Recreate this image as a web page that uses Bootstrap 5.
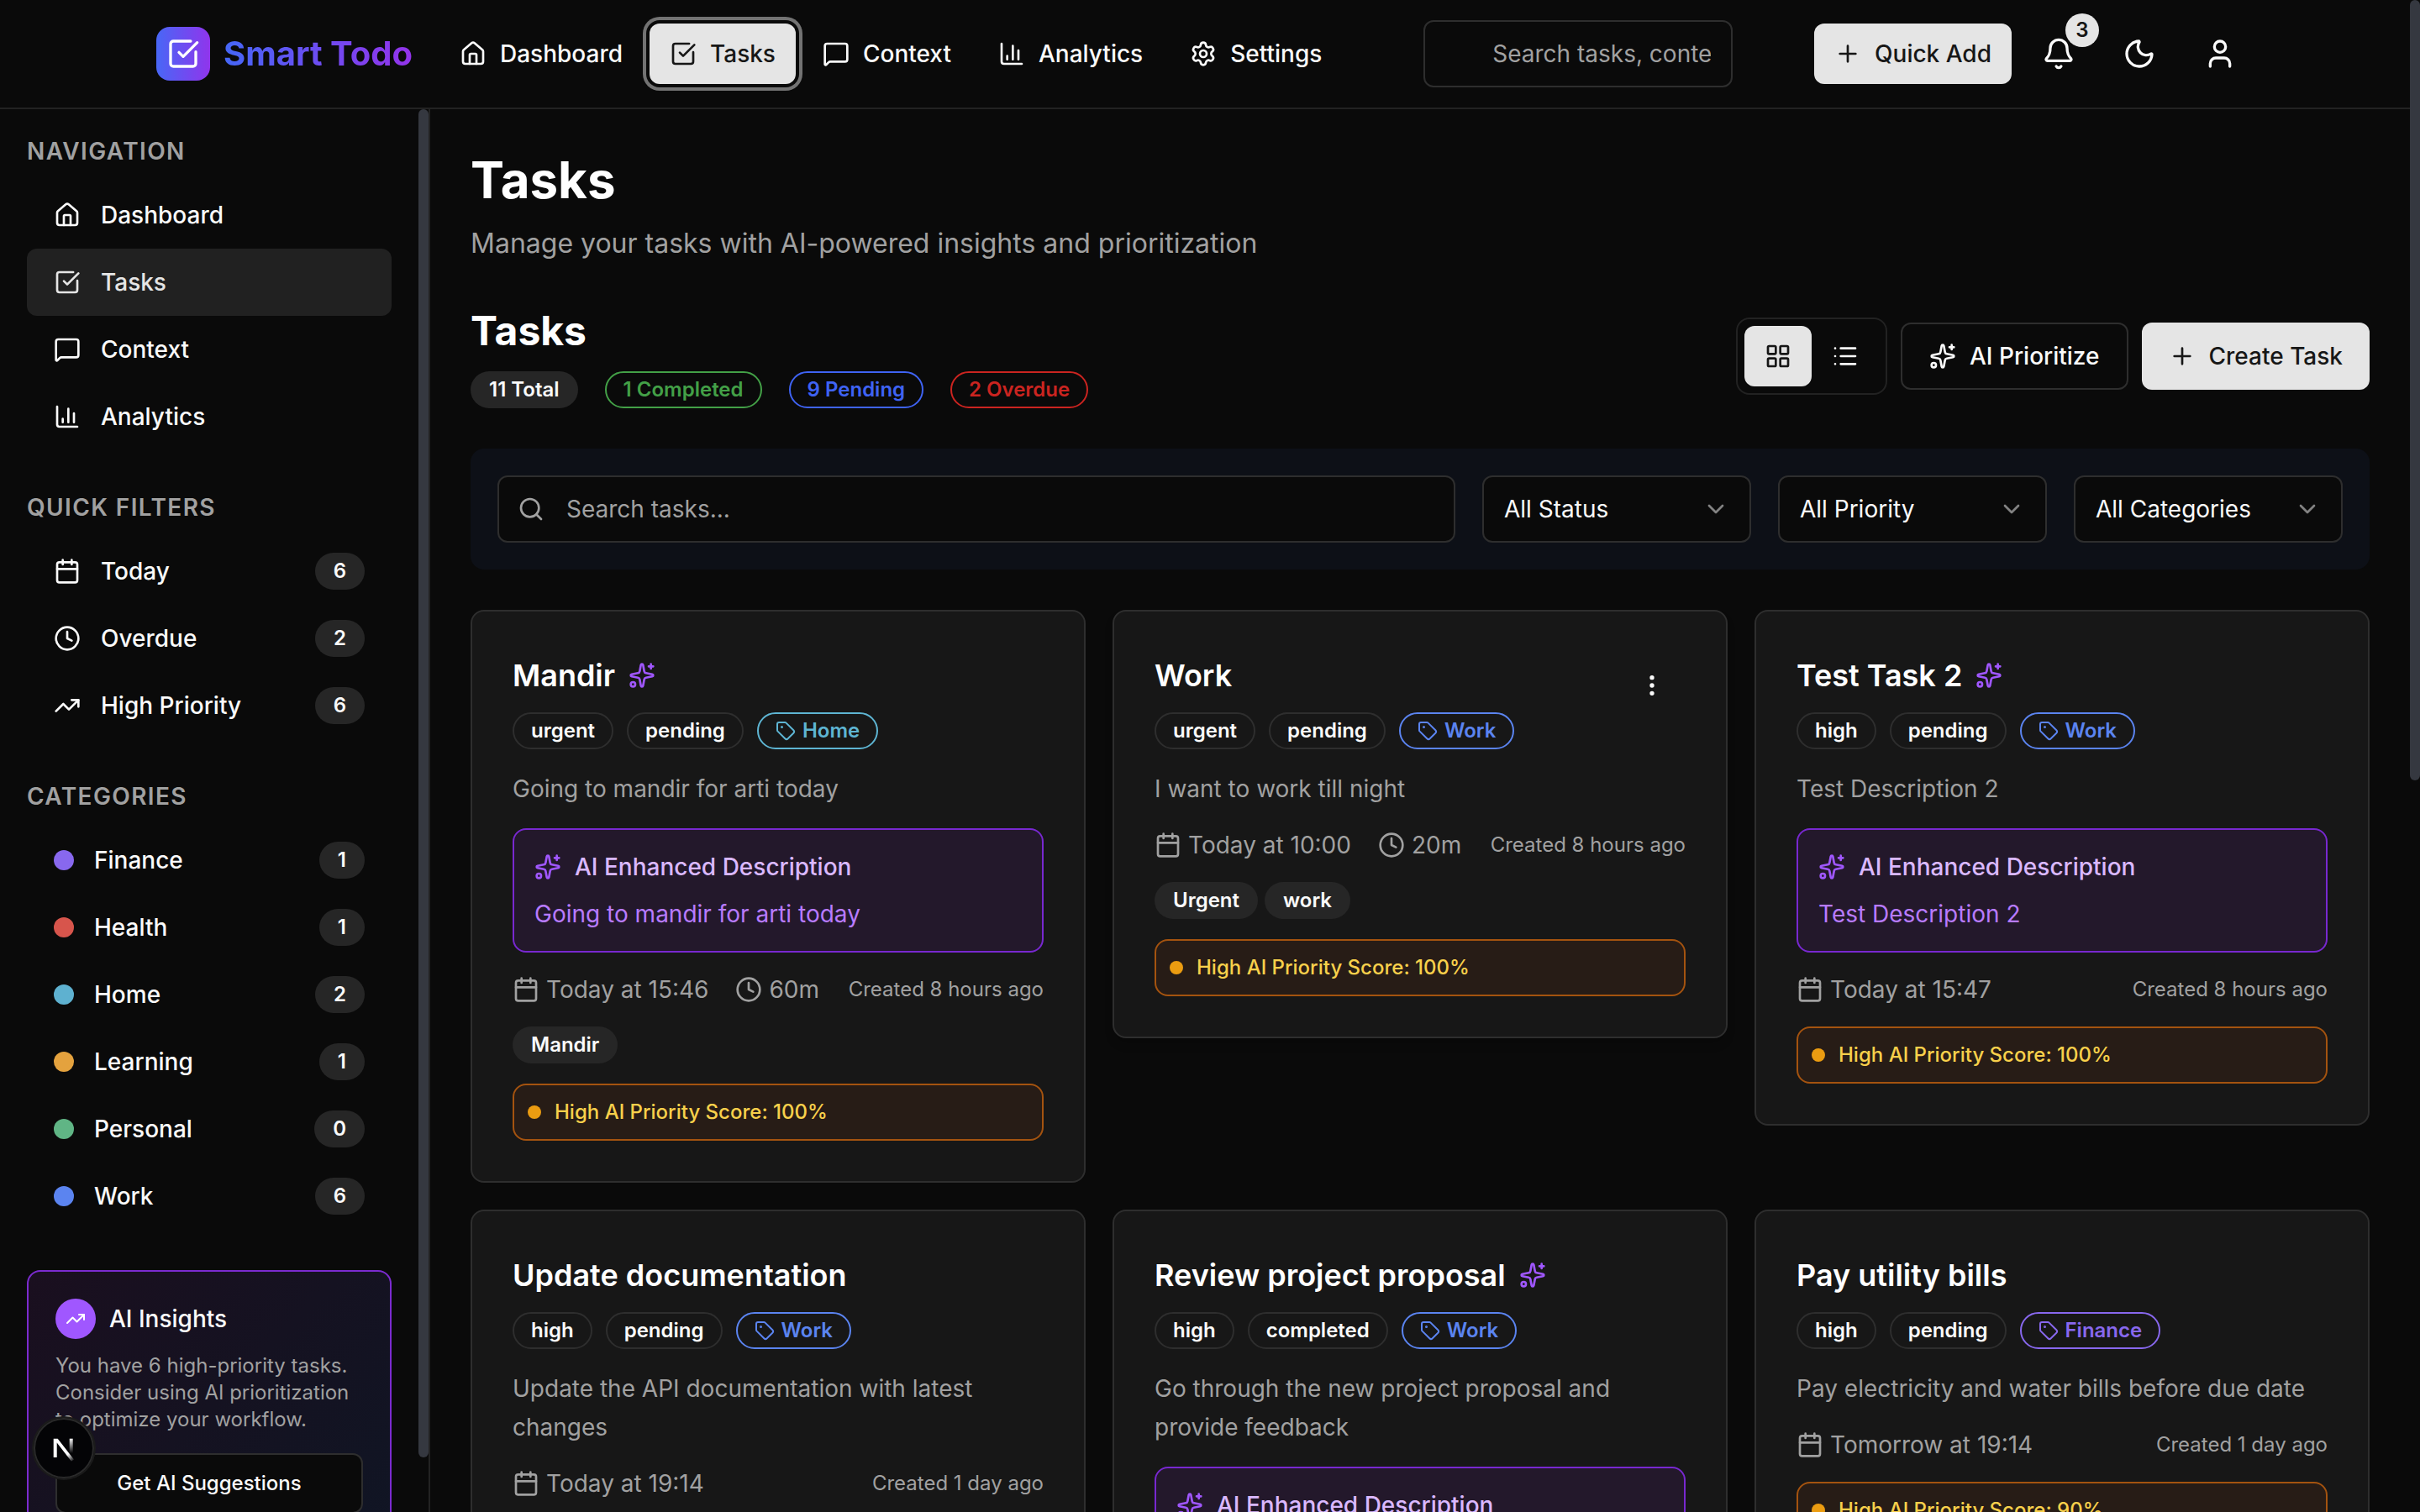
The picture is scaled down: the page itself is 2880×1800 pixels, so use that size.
<!DOCTYPE html>
<html lang="en" data-bs-theme="dark">
<head>
<meta charset="utf-8">
<meta name="viewport" content="width=device-width, initial-scale=1">
<title>Smart Todo</title>
<link href="https://cdn.jsdelivr.net/npm/bootstrap@5.3.0/dist/css/bootstrap.min.css" rel="stylesheet">
<style>
:root {
  --bg: #0a0a0a; --fg: #fafafa; --muted: #a1a1a1; --line: #222222; --field-line: #2e2e2e;
  --panel: #171717; --chip: #262626; --primary: #e5e5e5; --primary-fg: #171717; --thumb: #353840;
  --sky: #5eb5d3; --blue: #5b84f0; --violet: #8868ee;
}
body { background: var(--bg); color: var(--fg); font-family: Inter, sans-serif; font-size: 28px; line-height: 40px; }
svg { display: block; flex: none; fill: none; stroke: currentColor; stroke-width: 2; stroke-linecap: round; stroke-linejoin: round; width: 32px; height: 32px; }
.ic-sm { width: 24px; height: 24px; }
.ic-lg { width: 40px; height: 40px; }
.mw0 { min-width: 0; min-height: 0; }
.gap-32 { gap: 32px; }
.gap-48 { gap: 48px; }
.tone-muted { color: var(--muted); }

/* scroll tracks */
.track { width: 12px; flex: none; }
.thumb { background: var(--thumb); border-radius: 6px; }
.thumb-page { height: 51.6%; }
.thumb-side { height: 96.1%; }

/* top bar */
.topbar { border-bottom: 2px solid var(--line); padding: 24px 0; }
.topbar-in { width: 100%; max-width: 2560px; margin: 0 auto; padding: 0 32px; }
.logo-tile { width: 64px; height: 64px; border-radius: 16px; background: linear-gradient(90deg, #4867f6, #9035ec); color: #fff; }
.logo-name { font-size: 40px; line-height: 56px; font-weight: 700; background: linear-gradient(90deg, #4567f7, #9333ea); -webkit-background-clip: text; background-clip: text; color: transparent; }
.act { display: inline-flex; align-items: center; justify-content: center; gap: 16px; height: 80px; padding: 0 32px; border: 0; border-radius: 12px; font-size: 28px; line-height: 40px; font-weight: 500; color: var(--fg); background: transparent; text-decoration: none; white-space: nowrap; }
.act-solid { background: var(--primary); color: var(--primary-fg); }
.act-line { background: var(--bg); border: 2px solid var(--field-line); }
.act-sm { height: 72px; padding: 0 24px; }
.act-square { width: 80px; padding: 0; }
.act-focus { box-shadow: 0 0 0 4px var(--bg), 0 0 0 8px #737373; }
.count-dot { top: -8px; right: -8px; width: 40px; height: 40px; border-radius: 20px; background: var(--primary); color: var(--primary-fg); font-size: 24px; line-height: 40px; font-weight: 600; text-align: center; }
.field { width: 100%; height: 80px; border: 2px solid var(--field-line); border-radius: 12px; background: var(--bg); color: var(--fg); font-size: 28px; line-height: 40px; padding: 0 24px; appearance: none; outline: 0; }
.field::placeholder { color: var(--muted); opacity: 1; }
.field-search { padding-left: 80px; }
.field-icon { top: 24px; color: var(--muted); pointer-events: none; }
.field-icon-start { left: 24px; }
.field-icon-end { right: 26px; opacity: .8; }
.top-search { width: 368px; }
.pick { width: 320px; }

/* side bar */
.sidebar { width: 512px; flex: none; border-right: 2px solid var(--line); }
.side-in { padding: 30px 32px 32px; }
.side-title { margin: 0 0 16px; font-size: 28px; line-height: 40px; font-weight: 600; letter-spacing: .05em; text-transform: uppercase; color: var(--muted); }
.side-link { display: flex; align-items: center; gap: 24px; height: 80px; padding: 0 32px; border-radius: 12px; color: var(--fg); font-weight: 500; text-decoration: none; }
.side-link.active { background: #212121; color: var(--primary); }
.swatch { width: 24px; height: 24px; border-radius: 12px; flex: none; }
.insights { border: 2px solid #7b2bcf; border-radius: 16px; padding: 32px; background: linear-gradient(135deg, #1a0f1f, #151221 50%, #101524); }
.insights-icon { width: 48px; height: 48px; border-radius: 24px; background: #a057ff; color: #fff; }
.text-24 { font-size: 24px; line-height: 32px; }
.dev-badge { left: 40px; bottom: 40px; width: 72px; height: 72px; padding: 0; border: 0; border-radius: 36px; background: #040406; box-shadow: inset 0 0 0 2px #2a2a2a, 0 0 0 2px #1b1b1b; z-index: 5; }
.dev-badge svg { width: 72px; height: 72px; }

/* content */
.content { padding: 48px 48px 0; }
.page-title { font-size: 60px; line-height: 72px; font-weight: 700; }
.page-lead { font-size: 32px; line-height: 48px; color: var(--muted); }
.list-title { font-size: 48px; line-height: 64px; font-weight: 700; }
.pill { display: inline-flex; align-items: center; gap: 8px; padding: 4px 20px; border: 2px solid var(--field-line); border-radius: 22px; font-size: 24px; line-height: 32px; font-weight: 600; color: var(--fg); white-space: nowrap; }
.pill-fill { background: var(--chip); border-color: transparent; }
.pill-green { color: #43a047; border-color: #43a047; }
.pill-indigo { color: #3f63f4; border-color: #3f63f4; }
.pill-red { color: #cb2420; border-color: #cb2420; }
.pill-sky { color: var(--sky); border-color: var(--sky); }
.pill-blue { color: var(--blue); border-color: var(--blue); }
.pill-violet { color: var(--violet); border-color: var(--violet); }
.toggle { padding: 8px; border: 2px solid var(--line); border-radius: 16px; }
.toggle .act { width: 80px; padding: 0; }
.filters { background: #0d1017; border-radius: 16px; padding: 32px; }
.tiles { --bs-gutter-x: 32px; --bs-gutter-y: 32px; }
.task { background: var(--panel); border: 2px solid var(--field-line); border-radius: 16px; padding: 48px; gap: 24px; }
.task-hover { box-shadow: 0 8px 12px -2px rgba(0, 0, 0, .2); }
.task-name { font-size: 36px; line-height: 56px; font-weight: 600; }
.task-text { line-height: 46px; color: var(--muted); }
.tone-spark { color: #a057ff; }
.ai-box { border: 2px solid #7828d0; border-radius: 16px; background: #23182b; padding: 24px; gap: 16px; color: #b87bff; }
.ai-head { font-weight: 500; color: #dab8ff; }
.score { border: 2px solid #a4530f; border-radius: 16px; background: #271c16; padding: 16px; color: #f8d04b; font-size: 24px; line-height: 32px; font-weight: 500; }
.score-dot { width: 16px; height: 16px; border-radius: 8px; background: #eb9c11; }
</style>
<script src="https://cdn.jsdelivr.net/npm/bootstrap@5.3.0/dist/js/bootstrap.bundle.min.js"></script>
</head>
<body class="vh-100 overflow-hidden d-flex">

<svg class="d-none" aria-hidden="true">
  <symbol id="house" viewBox="0 0 24 24"><path d="M15 21v-8a1 1 0 0 0-1-1h-4a1 1 0 0 0-1 1v8"/><path d="M3 10a2 2 0 0 1 .709-1.528l7-5.999a2 2 0 0 1 2.582 0l7 5.999A2 2 0 0 1 21 10v9a2 2 0 0 1-2 2H5a2 2 0 0 1-2-2z"/></symbol>
  <symbol id="check" viewBox="0 0 24 24"><path d="M21 10.656V19a2 2 0 0 1-2 2H5a2 2 0 0 1-2-2V5a2 2 0 0 1 2-2h12.344"/><path d="m9 11 3 3L22 4"/></symbol>
  <symbol id="message" viewBox="0 0 24 24"><path d="M22 17a2 2 0 0 1-2 2H6.828a2 2 0 0 0-1.414.586l-2.202 2.202A.71.71 0 0 1 2 21.286V5a2 2 0 0 1 2-2h16a2 2 0 0 1 2 2z"/></symbol>
  <symbol id="chart" viewBox="0 0 24 24"><path d="M3 3v16a2 2 0 0 0 2 2h16M18 17V9M13 17V5M8 17v-3"/></symbol>
  <symbol id="gear" viewBox="0 0 24 24"><path d="M9.671 4.136a2.34 2.34 0 0 1 4.659 0 2.34 2.34 0 0 0 3.319 1.915 2.34 2.34 0 0 1 2.33 4.033 2.34 2.34 0 0 0 0 3.831 2.34 2.34 0 0 1-2.33 4.033 2.34 2.34 0 0 0-3.319 1.915 2.34 2.34 0 0 1-4.659 0 2.34 2.34 0 0 0-3.32-1.915 2.34 2.34 0 0 1-2.33-4.033 2.34 2.34 0 0 0 0-3.831A2.34 2.34 0 0 1 6.35 6.051a2.34 2.34 0 0 0 3.319-1.915"/><circle cx="12" cy="12" r="3"/></symbol>
  <symbol id="plus" viewBox="0 0 24 24"><path d="M5 12h14M12 5v14"/></symbol>
  <symbol id="bell" viewBox="0 0 24 24"><path d="M10.268 21a2 2 0 0 0 3.464 0"/><path d="M3.262 15.326A1 1 0 0 0 4 17h16a1 1 0 0 0 .74-1.673C19.41 13.956 18 12.499 18 8A6 6 0 0 0 6 8c0 4.499-1.411 5.956-2.738 7.326"/></symbol>
  <symbol id="moon" viewBox="0 0 24 24"><path d="M20.985 12.486a9 9 0 1 1-9.473-9.472c.405-.022.617.46.402.803a6 6 0 0 0 8.268 8.268c.344-.215.825-.004.803.401"/></symbol>
  <symbol id="user" viewBox="0 0 24 24"><path d="M19 21v-2a4 4 0 0 0-4-4H9a4 4 0 0 0-4 4v2"/><circle cx="12" cy="7" r="4"/></symbol>
  <symbol id="grid" viewBox="0 0 24 24"><rect width="7" height="7" x="3" y="3" rx="1"/><rect width="7" height="7" x="14" y="3" rx="1"/><rect width="7" height="7" x="14" y="14" rx="1"/><rect width="7" height="7" x="3" y="14" rx="1"/></symbol>
  <symbol id="list" viewBox="0 0 24 24"><path d="M3 5h.01M3 12h.01M3 19h.01M8 5h13M8 12h13M8 19h13"/></symbol>
  <symbol id="sparkles" viewBox="0 0 24 24"><path d="M11.017 2.814a1 1 0 0 1 1.966 0l1.051 5.558a2 2 0 0 0 1.594 1.594l5.558 1.051a1 1 0 0 1 0 1.966l-5.558 1.051a2 2 0 0 0-1.594 1.594l-1.051 5.558a1 1 0 0 1-1.966 0l-1.051-5.558a2 2 0 0 0-1.594-1.594l-5.558-1.051a1 1 0 0 1 0-1.966l5.558-1.051a2 2 0 0 0 1.594-1.594zM20 2v4M22 4h-4"/><circle cx="4" cy="20" r="2"/></symbol>
  <symbol id="calendar" viewBox="0 0 24 24"><path d="M8 2v4M16 2v4M3 10h18"/><rect width="18" height="18" x="3" y="4" rx="2"/></symbol>
  <symbol id="clock" viewBox="0 0 24 24"><path d="M12 6v6l4 2"/><circle cx="12" cy="12" r="10"/></symbol>
  <symbol id="trend" viewBox="0 0 24 24"><path d="M16 7h6v6"/><path d="m22 7-8.5 8.5-5-5L2 17"/></symbol>
  <symbol id="tag" viewBox="0 0 24 24"><path d="M12.586 2.586A2 2 0 0 0 11.172 2H4a2 2 0 0 0-2 2v7.172a2 2 0 0 0 .586 1.414l8.704 8.704a2.426 2.426 0 0 0 3.42 0l6.58-6.58a2.426 2.426 0 0 0 0-3.42z"/><circle cx="7.5" cy="7.5" r=".5" fill="currentColor"/></symbol>
  <symbol id="dots" viewBox="0 0 24 24"><circle cx="12" cy="12" r="1"/><circle cx="12" cy="5" r="1"/><circle cx="12" cy="19" r="1"/></symbol>
  <symbol id="search" viewBox="0 0 24 24"><path d="m21 21-4.34-4.34"/><circle cx="11" cy="11" r="8"/></symbol>
  <symbol id="chevron" viewBox="0 0 24 24"><path d="m6 9 6 6 6-6"/></symbol>
</svg>

<div class="d-flex flex-column flex-fill mw0">
  <header class="topbar">
    <div class="topbar-in d-flex align-items-center justify-content-between">
      <div class="d-flex align-items-center gap-32">
        <a href="#" class="d-flex align-items-center gap-3 text-decoration-none">
          <span class="logo-tile d-flex align-items-center justify-content-center"><svg class="ic-lg"><use href="#check"/></svg></span>
          <span class="logo-name">Smart Todo</span>
        </a>
        <nav class="d-flex align-items-center gap-2" aria-label="Main">
          <a href="#" class="act act-sm"><svg><use href="#house"/></svg>Dashboard</a>
          <a href="#" class="act act-sm act-solid act-focus" aria-current="page"><svg><use href="#check"/></svg>Tasks</a>
          <a href="#" class="act act-sm"><svg><use href="#message"/></svg>Context</a>
          <a href="#" class="act act-sm"><svg><use href="#chart"/></svg>Analytics</a>
          <a href="#" class="act act-sm"><svg><use href="#gear"/></svg>Settings</a>
        </nav>
      </div>
      <div class="top-search"><input class="field field-search" type="text" placeholder="Search tasks, contexts..." aria-label="Search tasks and contexts"></div>
      <div class="d-flex align-items-center gap-3">
        <button type="button" class="act act-sm act-solid"><svg><use href="#plus"/></svg>Quick Add</button>
        <button type="button" class="act act-square position-relative" aria-label="Notifications"><svg class="ic-lg"><use href="#bell"/></svg><span class="count-dot position-absolute">3</span></button>
        <button type="button" class="act act-square" aria-label="Toggle theme"><svg class="ic-lg"><use href="#moon"/></svg></button>
        <button type="button" class="act act-square" aria-label="Account"><svg class="ic-lg"><use href="#user"/></svg></button>
      </div>
    </div>
  </header>

  <div class="d-flex flex-fill mw0">
    <aside class="sidebar d-flex overflow-hidden">
      <div class="side-in d-flex flex-column flex-fill gap-48 mw0">
        <nav aria-label="Navigation">
          <h2 class="side-title">Navigation</h2>
          <a href="#" class="side-link"><svg><use href="#house"/></svg>Dashboard</a>
          <a href="#" class="side-link active" aria-current="page"><svg><use href="#check"/></svg>Tasks</a>
          <a href="#" class="side-link"><svg><use href="#message"/></svg>Context</a>
          <a href="#" class="side-link"><svg><use href="#chart"/></svg>Analytics</a>
        </nav>
        <nav aria-label="Quick filters">
          <h2 class="side-title">Quick Filters</h2>
          <a href="#" class="side-link"><svg><use href="#calendar"/></svg>Today<span class="pill pill-fill ms-auto">6</span></a>
          <a href="#" class="side-link"><svg><use href="#clock"/></svg>Overdue<span class="pill pill-fill ms-auto">2</span></a>
          <a href="#" class="side-link"><svg><use href="#trend"/></svg>High Priority<span class="pill pill-fill ms-auto">6</span></a>
        </nav>
        <nav aria-label="Categories">
          <h2 class="side-title">Categories</h2>
          <a href="#" class="side-link"><span class="swatch" style="background:#8868ee"></span>Finance<span class="pill pill-fill ms-auto">1</span></a>
          <a href="#" class="side-link"><span class="swatch" style="background:#d7554c"></span>Health<span class="pill pill-fill ms-auto">1</span></a>
          <a href="#" class="side-link"><span class="swatch" style="background:#5eb1d0"></span>Home<span class="pill pill-fill ms-auto">2</span></a>
          <a href="#" class="side-link"><span class="swatch" style="background:#e4a23e"></span>Learning<span class="pill pill-fill ms-auto">1</span></a>
          <a href="#" class="side-link"><span class="swatch" style="background:#60b585"></span>Personal<span class="pill pill-fill ms-auto">0</span></a>
          <a href="#" class="side-link"><span class="swatch" style="background:#5b84f0"></span>Work<span class="pill pill-fill ms-auto">6</span></a>
        </nav>
        <section class="insights">
          <div class="d-flex align-items-center gap-3 mb-3">
            <span class="insights-icon d-flex align-items-center justify-content-center"><svg class="ic-sm"><use href="#trend"/></svg></span>
            <span class="fw-medium">AI Insights</span>
          </div>
          <p class="text-24 tone-muted mb-4">You have 6 high-priority tasks. Consider using AI prioritization to optimize your workflow.</p>
          <button type="button" class="act act-sm act-line w-100 text-24">Get AI Suggestions</button>
        </section>
      </div>
      <div class="track"><div class="thumb thumb-side"></div></div>
    </aside>

    <main class="content d-flex flex-column flex-fill gap-48 mw0 overflow-hidden">
      <div>
        <h1 class="page-title mb-3">Tasks</h1>
        <p class="page-lead mb-0">Manage your tasks with AI-powered insights and prioritization</p>
      </div>

      <div class="d-flex align-items-center justify-content-between">
        <div>
          <h2 class="list-title mb-3">Tasks</h2>
          <div class="d-flex gap-32">
            <span class="pill pill-fill">11 Total</span>
            <span class="pill pill-green">1 Completed</span>
            <span class="pill pill-indigo">9 Pending</span>
            <span class="pill pill-red">2 Overdue</span>
          </div>
        </div>
        <div class="d-flex align-items-center gap-3">
          <div class="toggle d-flex" role="group" aria-label="View">
            <button type="button" class="act act-sm act-solid" aria-label="Grid view"><svg><use href="#grid"/></svg></button>
            <button type="button" class="act act-sm" aria-label="List view"><svg><use href="#list"/></svg></button>
          </div>
          <button type="button" class="act act-line"><svg><use href="#sparkles"/></svg>AI Prioritize</button>
          <button type="button" class="act act-solid"><svg><use href="#plus"/></svg>Create Task</button>
        </div>
      </div>

      <div class="filters d-flex gap-32">
        <div class="position-relative flex-fill">
          <svg class="field-icon field-icon-start position-absolute"><use href="#search"/></svg>
          <input class="field field-search" type="text" placeholder="Search tasks..." aria-label="Search tasks">
        </div>
        <div class="pick position-relative">
          <select class="field" aria-label="Status"><option>All Status</option><option>Pending</option><option>Completed</option></select>
          <svg class="field-icon field-icon-end position-absolute"><use href="#chevron"/></svg>
        </div>
        <div class="pick position-relative">
          <select class="field" aria-label="Priority"><option>All Priority</option><option>Urgent</option><option>High</option></select>
          <svg class="field-icon field-icon-end position-absolute"><use href="#chevron"/></svg>
        </div>
        <div class="pick position-relative">
          <select class="field" aria-label="Category"><option>All Categories</option><option>Home</option><option>Work</option></select>
          <svg class="field-icon field-icon-end position-absolute"><use href="#chevron"/></svg>
        </div>
      </div>

      <div class="row row-cols-3 tiles">
        <div class="col">
          <article class="task d-flex flex-column">
            <div>
              <div class="d-flex align-items-center gap-3 mb-3"><h3 class="task-name mb-0">Mandir</h3><svg class="tone-spark"><use href="#sparkles"/></svg></div>
              <div class="d-flex gap-3"><span class="pill">urgent</span><span class="pill">pending</span><span class="pill pill-sky"><svg class="ic-sm"><use href="#tag"/></svg>Home</span></div>
            </div>
            <p class="task-text mb-0">Going to mandir for arti today</p>
            <div class="ai-box d-flex flex-column">
              <div class="ai-head d-flex align-items-center gap-3"><svg class="tone-spark"><use href="#sparkles"/></svg>AI Enhanced Description</div>
              <p class="mb-0">Going to mandir for arti today</p>
            </div>
            <div class="d-flex align-items-center justify-content-between tone-muted">
              <div class="d-flex gap-32"><span class="d-flex align-items-center gap-2"><svg><use href="#calendar"/></svg>Today at 15:46</span><span class="d-flex align-items-center gap-2"><svg><use href="#clock"/></svg>60m</span></div>
              <span class="text-24">Created 8 hours ago</span>
            </div>
            <div class="d-flex gap-2"><span class="pill pill-fill">Mandir</span></div>
            <div class="score d-flex align-items-center gap-3"><span class="score-dot"></span>High AI Priority Score: 100%</div>
          </article>
        </div>

        <div class="col">
          <article class="task task-hover d-flex flex-column">
            <div class="d-flex align-items-start justify-content-between">
              <div>
                <h3 class="task-name mb-3">Work</h3>
                <div class="d-flex gap-3"><span class="pill">urgent</span><span class="pill">pending</span><span class="pill pill-blue"><svg class="ic-sm"><use href="#tag"/></svg>Work</span></div>
              </div>
              <button type="button" class="act act-square" aria-label="Task menu"><svg><use href="#dots"/></svg></button>
            </div>
            <p class="task-text mb-0">I want to work till night</p>
            <div class="d-flex align-items-center justify-content-between tone-muted">
              <div class="d-flex gap-32"><span class="d-flex align-items-center gap-2"><svg><use href="#calendar"/></svg>Today at 10:00</span><span class="d-flex align-items-center gap-2"><svg><use href="#clock"/></svg>20m</span></div>
              <span class="text-24">Created 8 hours ago</span>
            </div>
            <div class="d-flex gap-2"><span class="pill pill-fill">Urgent</span><span class="pill pill-fill">work</span></div>
            <div class="score d-flex align-items-center gap-3"><span class="score-dot"></span>High AI Priority Score: 100%</div>
          </article>
        </div>

        <div class="col">
          <article class="task d-flex flex-column">
            <div>
              <div class="d-flex align-items-center gap-3 mb-3"><h3 class="task-name mb-0">Test Task 2</h3><svg class="tone-spark"><use href="#sparkles"/></svg></div>
              <div class="d-flex gap-3"><span class="pill">high</span><span class="pill">pending</span><span class="pill pill-blue"><svg class="ic-sm"><use href="#tag"/></svg>Work</span></div>
            </div>
            <p class="task-text mb-0">Test Description 2</p>
            <div class="ai-box d-flex flex-column">
              <div class="ai-head d-flex align-items-center gap-3"><svg class="tone-spark"><use href="#sparkles"/></svg>AI Enhanced Description</div>
              <p class="mb-0">Test Description 2</p>
            </div>
            <div class="d-flex align-items-center justify-content-between tone-muted">
              <span class="d-flex align-items-center gap-2"><svg><use href="#calendar"/></svg>Today at 15:47</span>
              <span class="text-24">Created 8 hours ago</span>
            </div>
            <div class="score d-flex align-items-center gap-3"><span class="score-dot"></span>High AI Priority Score: 100%</div>
          </article>
        </div>

        <div class="col">
          <article class="task d-flex flex-column">
            <div>
              <h3 class="task-name mb-3">Update documentation</h3>
              <div class="d-flex gap-3"><span class="pill">high</span><span class="pill">pending</span><span class="pill pill-blue"><svg class="ic-sm"><use href="#tag"/></svg>Work</span></div>
            </div>
            <p class="task-text mb-0">Update the API documentation with latest changes</p>
            <div class="d-flex align-items-center justify-content-between tone-muted">
              <span class="d-flex align-items-center gap-2"><svg><use href="#calendar"/></svg>Today at 19:14</span>
              <span class="text-24">Created 1 day ago</span>
            </div>
          </article>
        </div>

        <div class="col">
          <article class="task d-flex flex-column">
            <div>
              <div class="d-flex align-items-center gap-3 mb-3"><h3 class="task-name mb-0">Review project proposal</h3><svg class="tone-spark"><use href="#sparkles"/></svg></div>
              <div class="d-flex gap-3"><span class="pill">high</span><span class="pill">completed</span><span class="pill pill-blue"><svg class="ic-sm"><use href="#tag"/></svg>Work</span></div>
            </div>
            <p class="task-text mb-0">Go through the new project proposal and provide feedback</p>
            <div class="ai-box d-flex flex-column">
              <div class="ai-head d-flex align-items-center gap-3"><svg class="tone-spark"><use href="#sparkles"/></svg>AI Enhanced Description</div>
            </div>
          </article>
        </div>

        <div class="col">
          <article class="task d-flex flex-column">
            <div>
              <h3 class="task-name mb-3">Pay utility bills</h3>
              <div class="d-flex gap-3"><span class="pill">high</span><span class="pill">pending</span><span class="pill pill-violet"><svg class="ic-sm"><use href="#tag"/></svg>Finance</span></div>
            </div>
            <p class="task-text mb-0">Pay electricity and water bills before due date</p>
            <div class="d-flex align-items-center justify-content-between tone-muted">
              <span class="d-flex align-items-center gap-2"><svg><use href="#calendar"/></svg>Tomorrow at 19:14</span>
              <span class="text-24">Created 1 day ago</span>
            </div>
            <div class="score d-flex align-items-center gap-3"><span class="score-dot"></span>High AI Priority Score: 90%</div>
          </article>
        </div>
      </div>
    </main>
  </div>
</div>

<div class="track"><div class="thumb thumb-page"></div></div>

<button type="button" class="dev-badge position-fixed" aria-label="Open developer tools">
  <svg viewBox="0 0 72 72">
    <defs>
      <linearGradient id="fade-a" gradientUnits="userSpaceOnUse" x1="36" y1="38" x2="47" y2="52"><stop offset="0.4" stop-color="#fff"/><stop offset="1" stop-color="#fff" stop-opacity="0"/></linearGradient>
      <linearGradient id="fade-b" gradientUnits="userSpaceOnUse" x1="45" y1="24" x2="45" y2="42"><stop offset="0" stop-color="#fff"/><stop offset="1" stop-color="#fff" stop-opacity="0"/></linearGradient>
    </defs>
    <path d="M23.700 24.700h5L48 49.500l-3 2.300L27.700 29.500V47h-4z" fill="url(#fade-a)" stroke="none"/>
    <path d="M42.700 24.700h4V43h-4z" fill="url(#fade-b)" stroke="none"/>
  </svg>
</button>
</body>
</html>
